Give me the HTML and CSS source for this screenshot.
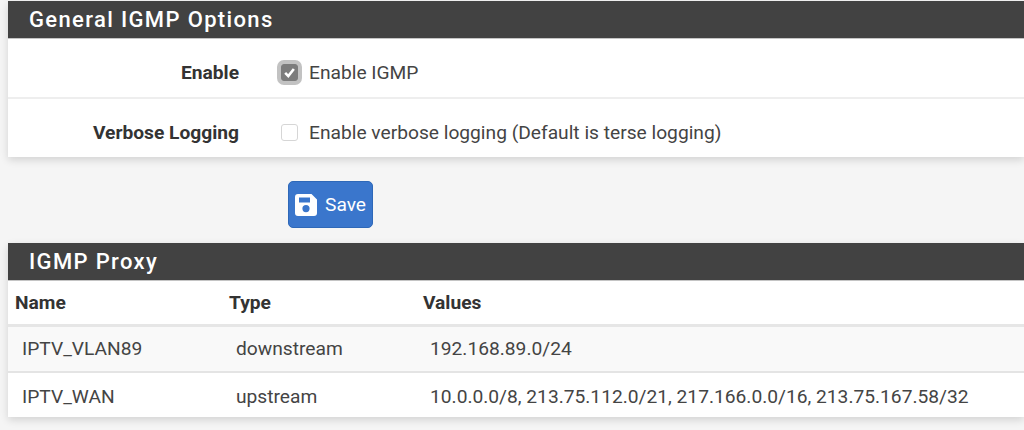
FILE: index.html
```html
<!DOCTYPE html>
<html lang="en">
<head>
<meta charset="utf-8">
<title>IGMP Proxy</title>
<link rel="stylesheet" href="styles.css">
</head>
<body>
<section class="panel">
  <h2 class="panel-title">General IGMP Options</h2>
  <div class="form-row">
    <div class="form-label">Enable</div>
    <label class="check-wrap">
      <span class="check checked">
        <svg viewBox="0 0 12 12" width="13" height="13"><path d="M2 6.4 4.9 9.3 10 2.8" fill="none" stroke="#fff" stroke-width="2.4"/></svg>
      </span>
      <span>Enable IGMP</span>
    </label>
  </div>
  <div class="form-row last">
    <div class="form-label">Verbose Logging</div>
    <label class="check-wrap">
      <span class="check"></span>
      <span>Enable verbose logging (Default is terse logging)</span>
    </label>
  </div>
</section>
<div class="actions">
  <button class="btn" type="button">
    <svg class="btn-icon" viewBox="0 0 22 22" width="22" height="22"><path fill-rule="evenodd" fill="#fff" d="M3 0H16.5L22 5.5V19a3 3 0 0 1-3 3H3a3 3 0 0 1-3-3V3a3 3 0 0 1 3-3ZM4 3.5V8.5H15V3.5ZM11 11a3.6 3.6 0 1 0 0 7.2 3.6 3.6 0 0 0 0-7.2Z"/></svg>
    <span>Save</span>
  </button>
</div>
<section class="panel">
  <h2 class="panel-title">IGMP Proxy</h2>
  <table class="grid">
    <thead>
      <tr><th class="c-name">Name</th><th class="c-type">Type</th><th>Values</th></tr>
    </thead>
    <tbody>
      <tr class="odd"><td>IPTV_VLAN89</td><td>downstream</td><td>192.168.89.0/24</td></tr>
      <tr><td>IPTV_WAN</td><td>upstream</td><td>10.0.0.0/8, 213.75.112.0/21, 217.166.0.0/16, 213.75.167.58/32</td></tr>
    </tbody>
  </table>
</section>
</body>
</html>
```
FILE: styles.css
```css
* { box-sizing: border-box; }
html, body { height: 100%; }
body {
  margin: 0;
  padding: 1px 0 0 8px;
  background: #f5f5f5;
  font-family: Roboto, "Liberation Sans", sans-serif;
  font-size: 19.2px;
  color: #444;
  overflow: hidden;
}
.panel {
  background: #fff;
  width: 1016px;
  box-shadow: 0 3px 8px rgba(0, 0, 0, 0.14);
}
.panel-title {
  margin: 0;
  height: 38px;
  padding: 0 0 0 21px;
  background: #424242;
  border-bottom: 1px solid #c4c4c4;
  color: #fff;
  font-size: 22px;
  font-weight: 500;
  letter-spacing: 1.35px;
  line-height: 37px;
}
.form-row {
  display: flex;
  align-items: center;
  height: 60px;
  padding-top: 8px;
  border-bottom: 2px solid #eeeeee;
}
.form-row.last {
  height: 58px;
  border-bottom: 0;
}
.form-label {
  width: 231px;
  text-align: right;
  font-weight: 700;
  color: #333;
}
.check-wrap {
  display: flex;
  align-items: center;
  margin-left: 42px;
}
.check {
  display: flex;
  align-items: center;
  justify-content: center;
  width: 17px;
  height: 17px;
  margin-right: 11px;
  border: 1px solid #d6d6d6;
  border-radius: 3px;
  background: #fff;
}
.check.checked {
  background: #7c7c7c;
  border-color: #7c7c7c;
  box-shadow: 0 0 0 4px #c2c2c2;
}
.actions {
  padding: 24px 0 15px 280px;
}
.btn {
  display: flex;
  align-items: center;
  gap: 8px;
  width: 85px;
  height: 47px;
  padding: 0 0 0 6px;
  background: #3a76cc;
  border: 1px solid #2e68b8;
  border-radius: 5px;
  color: #fff;
  font-family: inherit;
  font-size: 19.2px;
}
.btn-icon { flex: none; }
.grid {
  width: 100%;
  border-collapse: collapse;
  table-layout: fixed;
}
.grid th {
  height: 44px;
  padding: 0 0 0 7px;
  text-align: left;
  font-weight: 700;
  color: #333;
  border-bottom: 3px solid #e6e6e6;
}
.grid .c-name { width: 214px; }
.grid .c-type { width: 194px; }
.grid td {
  height: 47px;
  padding: 0 0 0 14px;
  border-bottom: 2px solid #e4e4e4;
  white-space: nowrap;
}
.grid tr:last-child td {
  height: 45px;
  padding-top: 2px;
  border-bottom: 0;
}
.grid .odd { background: #f9f9f9; }
```
